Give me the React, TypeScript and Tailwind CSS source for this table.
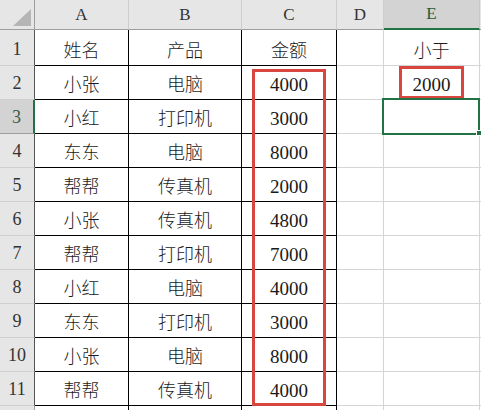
const cols = ["A", "B", "C", "D", "E"];

const rows = [
  ["姓名", "产品", "金额", "", "小于"],
  ["小张", "电脑", "4000", "", "2000"],
  ["小红", "打印机", "3000", "", ""],
  ["东东", "电脑", "8000", "", ""],
  ["帮帮", "传真机", "2000", "", ""],
  ["小张", "传真机", "4800", "", ""],
  ["帮帮", "打印机", "7000", "", ""],
  ["小红", "电脑", "4000", "", ""],
  ["东东", "打印机", "3000", "", ""],
  ["小张", "电脑", "8000", "", ""],
  ["帮帮", "传真机", "4000", "", ""],
];

const font = "font-['Liberation_Serif','Noto_Sans_CJK_SC',serif]";

export default function App() {
  return (
    <div className={`relative w-[481px] h-[410px] overflow-hidden bg-white text-[#1a1a1a] ${font}`}>
      <div className="grid grid-cols-[35px_94px_113px_95px_47px_96px_1fr] grid-rows-[30px_36px_repeat(11,34px)]">
        {/* corner */}
        <div className="relative bg-[#e6e6e6] border-r border-b border-[#9e9e9e]">
          <svg className="absolute left-[13px] top-[9px]" width="18" height="17" viewBox="0 0 18 17">
            <polygon points="18,0 18,17 0,17" fill="#b5b5b5" />
          </svg>
        </div>
        {cols.map((c) => (
          <div
            key={c}
            className={
              c === "E"
                ? "flex items-center justify-center bg-[#d3d3d3] border-r border-[#c8c8c8] border-b-2 border-b-[#217346] text-[#1e5c3a] text-[17px]"
                : "flex items-center justify-center bg-[#e6e6e6] border-r border-[#cfcfcf] border-b border-b-[#9e9e9e] text-[17px] text-[#333]"
            }
          >
            {c}
          </div>
        ))}
        <div className="bg-[#e6e6e6] border-b border-[#9e9e9e]" />

        {rows.map((r, i) => (
          <Row key={i} n={i + 1} cells={r} />
        ))}

        {/* row 12, cut off */}
        <div className="bg-[#e6e6e6] border-r border-[#9e9e9e]" />
        <div className="border-r border-black" />
        <div className="border-r border-black" />
        <div className="border-r border-black" />
        <div className="border-r border-[#d4d4d4]" />
        <div className="border-r border-[#d4d4d4]" />
        <div />
      </div>

      {/* highlight boxes */}
      <div className="absolute left-[252px] top-[69px] w-[74px] h-[337px] border-[3px] border-[#d9463f]" />
      <div className="absolute left-[399px] top-[66px] w-[65px] h-[33px] border-[3px] border-[#d9463f]" />
      <div className="absolute left-[382px] top-[98px] w-[98px] h-[37px] border-2 border-[#217346]" />
      <div className="absolute left-[476px] top-[130px] w-[6px] h-[6px] bg-[#217346] border border-white" />
    </div>
  );
}

function Cell({ v, grid }: { v: string; grid: boolean }) {
  const num = /^\d+$/.test(v);
  const line = grid ? "border-[#d4d4d4]" : "border-black";
  return (
    <div className={`flex items-end justify-center pb-[2px] border-r border-b leading-[24px] ${line}`}>
      {num ? (
        <span className="font-['Liberation_Serif',serif] text-[19px] font-normal">{v}</span>
      ) : (
        <span className="text-[18px] font-light">{v}</span>
      )}
    </div>
  );
}

function Row({ n, cells }: { n: number; cells: string[] }) {
  const sel = n === 3;
  return (
    <>
      <div
        className={
          sel
            ? "flex items-end justify-center pb-[2px] bg-[#d3d3d3] border-r-2 border-r-[#217346] border-b border-b-[#9e9e9e] text-[18px] text-[#3a5a48]"
            : "flex items-end justify-center pb-[2px] bg-[#e6e6e6] border-r border-r-[#555] border-b border-b-[#cfcfcf] text-[18px] text-[#333]"
        }
      >
        {n}
      </div>
      {cells.map((v, j) => (
        <Cell key={j} v={v} grid={j >= 3} />
      ))}
      <div className="border-b border-[#d4d4d4]" />
    </>
  );
}
